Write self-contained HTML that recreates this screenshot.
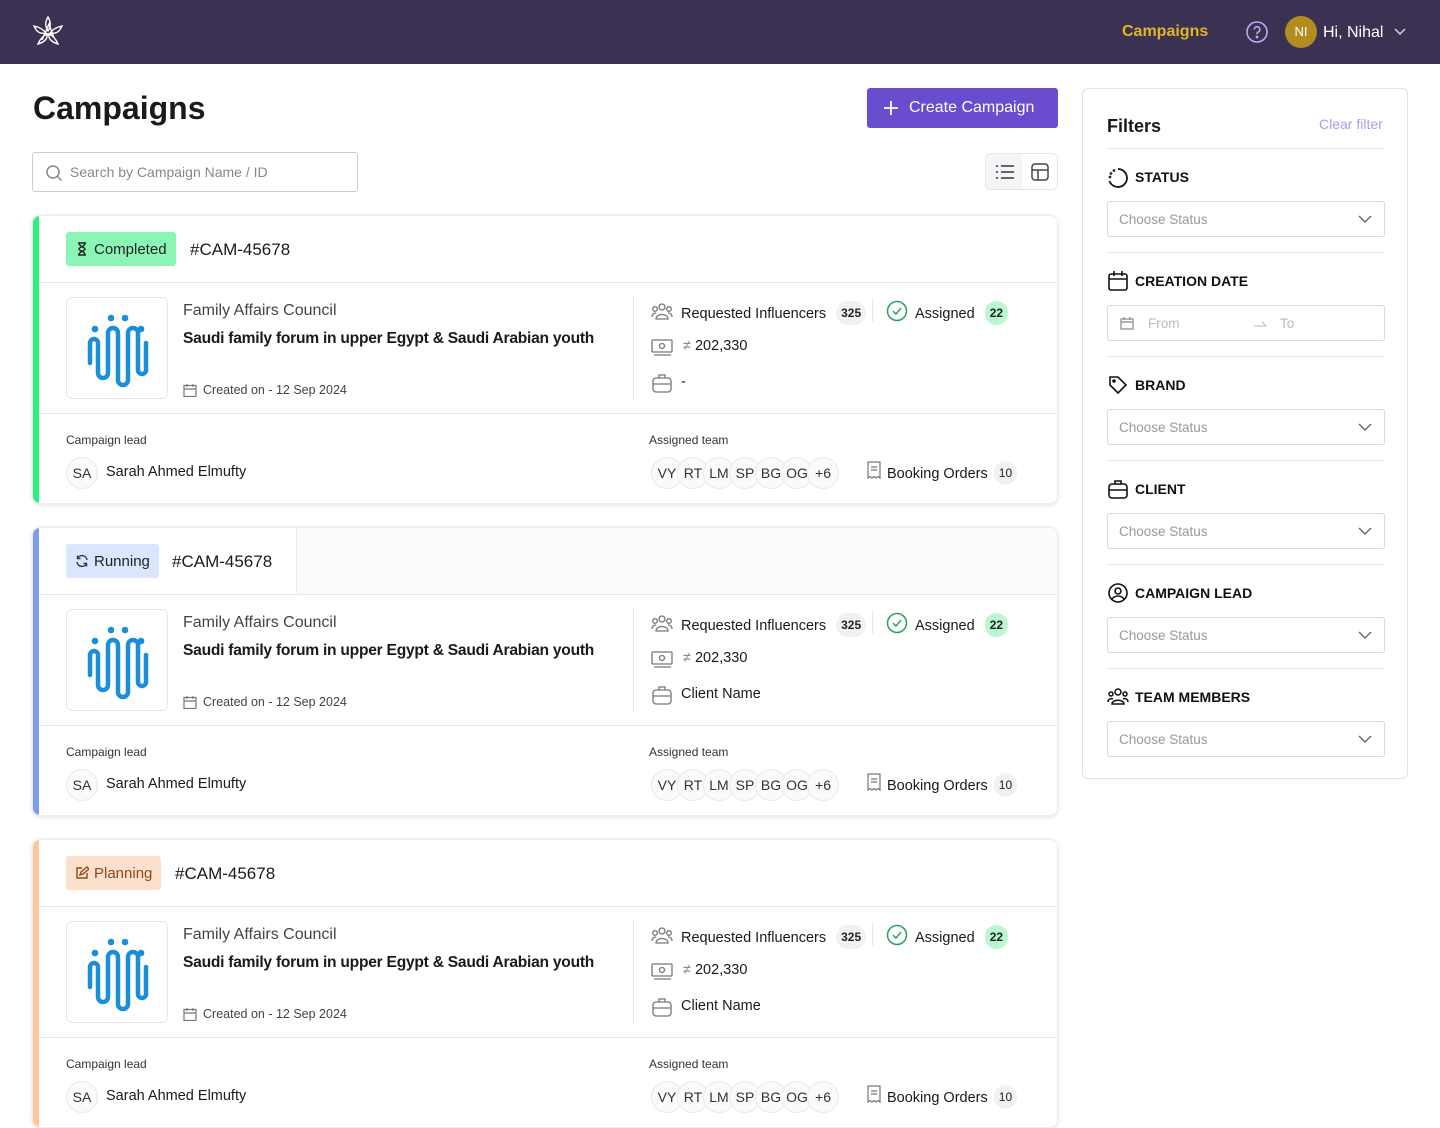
<!DOCTYPE html>
<html><head><meta charset="utf-8"><style>
*{box-sizing:border-box;margin:0;padding:0}
body{width:1440px;height:1039px;overflow:hidden;background:#fff;font-family:"Liberation Sans",sans-serif;color:#1a1a1a;position:relative}
.nav{position:absolute;left:0;top:0;width:1440px;height:64px;background:#3a3153}
.abs{position:absolute}
h1{position:absolute;left:33px;top:90px;font-size:32px;font-weight:700;color:#1a1a1a}
.search{position:absolute;left:32px;top:152px;width:326px;height:40px;border:1px solid #ccc;border-radius:3px;font-size:14px;color:#888;padding:11px 0 0 37px}
.btn{position:absolute;left:867px;top:88px;width:191px;height:40px;background:#6a4ccf;border-radius:3px;color:#fff;font-size:16px;line-height:40px;padding-left:42px}
.toggle{position:absolute;left:985px;top:153px;width:73px;height:37px;border:1px solid #e5e5e5;border-radius:6px;overflow:hidden}
.card{position:absolute;left:32px;width:1026px;height:289px;border-radius:8px;box-shadow:0 1px 4px rgba(0,0,0,.12);border:1px solid #eee;overflow:hidden;background:#fff}
.card .bar{position:absolute;left:0;top:0;bottom:0;width:6px}
.hdr{position:absolute;left:6px;right:0;top:0;height:67px;border-bottom:1px solid #e8e8e8}
.badge{position:absolute;left:27px;top:16px;height:34px;border-radius:3px;font-size:15px;padding:9px 9px 0 28px;color:#222}
.camid{position:absolute;top:24px;font-size:17px;color:#1a1a1a}
.logo{position:absolute;left:33px;top:81px;width:102px;height:102px;border:1px solid #e6e6e6;border-radius:6px}
.org{position:absolute;left:150px;top:86px;font-size:16px;color:#444}
.title{position:absolute;left:150px;top:114px;font-size:15.6px;letter-spacing:-0.25px;font-weight:700;color:#1a1a1a}
.created{position:absolute;left:150px;top:167px;font-size:12.5px;color:#444;padding-left:20px}
.vsep{position:absolute;left:600px;top:81px;width:1px;height:102px;background:#e6e6e6}
.hsep{position:absolute;left:6px;right:0;top:197px;height:1px;background:#e8e8e8}
.lbl{position:absolute;font-size:12px;color:#333}
.t15{font-size:14.5px;color:#1a1a1a}
.pill{display:inline-block;border-radius:12px;background:#f1f1f1;font-size:12px;padding:5px 5px;font-weight:700;color:#222}
.av{position:absolute;top:241px;width:32px;height:32px;border-radius:50%;border:1px solid #e9e9e9;background:#fafafa;font-size:14px;text-align:center;line-height:30px;color:#333}
.filters{position:absolute;left:1082px;top:88px;width:326px;height:691px;border:1px solid #e3e3e3;border-radius:6px}
.fh{position:absolute;left:24px;font-size:14px;font-weight:700;padding-left:28px;color:#111}
.sel{position:absolute;left:24px;width:278px;height:36px;border:1px solid #d9d9d9;border-radius:3px;font-size:13.5px;color:#999;padding:10px 0 0 11px}
.fline{position:absolute;left:24px;width:278px;height:1px;background:#e8e8e8}
.chev{position:absolute;right:12px;top:12px}
</style></head><body>
<div class="nav">
<svg class="abs" style="left:30px;top:14px" width="36" height="36" viewBox="0 0 36 36" fill="none" stroke="#fff" stroke-width="1.4"><path d="M18 3c-3 5-3 9 0 14 3-5 3-9 0-14zM4 12c5 1 9 3 12 7-5 1-9 0-12-7zM32 12c-5 1-9 3-12 7 5 1 9 0 12-7zM8 30c2-5 5-8 9-10 1 4-2 8-9 10zM28 30c-2-5-5-8-9-10-1 4 2 8 9 10zM12 26l7-16 5 14M14 20h9"/></svg>
<div class="abs" style="left:1122px;top:23px;font-size:16px;font-weight:700;color:#e3b521">Campaigns</div>
<svg class="abs" style="left:1245px;top:20px" width="24" height="24" viewBox="0 0 24 24" fill="none" stroke="#b9aef5" stroke-width="1.6"><circle cx="12" cy="12" r="10"/><path d="M9.3 9.5a2.8 2.8 0 1 1 3.6 2.7c-.6.3-.9.8-.9 1.5v.5"/><circle cx="12" cy="17" r=".6" fill="#b9aef5"/></svg>
<div class="abs" style="left:1285px;top:16px;width:32px;height:32px;border-radius:50%;background:#b38c1f;color:#fff;font-size:13px;text-align:center;line-height:32px">NI</div>
<div class="abs" style="left:1323px;top:24px;font-size:16px;color:#fff">Hi, Nihal</div>
<svg class="abs" style="left:1393px;top:27px" width="14" height="10" viewBox="0 0 14 10" fill="none" stroke="#ddd" stroke-width="1.4"><path d="M2 2l5 5 5-5"/></svg>
</div>
<h1>Campaigns</h1>
<div class="search">Search by Campaign Name / ID
<svg class="abs" style="left:12px;top:11px" width="18" height="18" viewBox="0 0 18 18" fill="none" stroke="#888" stroke-width="1.5"><circle cx="8" cy="8" r="6"/><path d="M12.5 12.5l4 4"/></svg></div>
<div class="btn"><svg class="abs" style="left:16px;top:12px" width="16" height="16" viewBox="0 0 16 16" stroke="#fff" stroke-width="1.8"><path d="M8 1v14M1 8h14"/></svg>Create Campaign</div>
<div class="toggle"><div class="abs" style="left:0;top:0;width:36px;height:37px;background:#f5f5f5"></div>
<svg class="abs" style="left:9px;top:10px" width="20" height="16" viewBox="0 0 20 16" stroke="#3a3153" stroke-width="1.6"><path d="M6 2h13M6 8h13M6 14h13M1 2h2M1 8h2M1 14h2"/></svg>
<svg class="abs" style="left:45px;top:9px" width="18" height="18" viewBox="0 0 18 18" fill="none" stroke="#444" stroke-width="1.5"><rect x="1" y="1" width="16" height="16" rx="3"/><path d="M1 7h16M7 7v10"/></svg></div>

<div class="card" style="top:215px"><div class="bar" style="background:#2ef07f"></div>
<div class="hdr"><div class="badge" style="background:#8af5b4">Completed<svg class="abs" style="left:9px;top:10px" width="14" height="14" viewBox="0 0 14 14" fill="none" stroke="#222" stroke-width="1.4"><path d="M3 1h8M3 13h8M4 1c0 4 6 4 6 6s-6 2-6 6M10 1c0 4-6 4-6 6s6 2 6 6"/></svg></div><div class="camid" style="left:151px">#CAM-45678</div></div>
INNER1
</div>
<div class="card" style="top:527px"><div class="bar" style="background:#7b9cf0"></div>
<div class="hdr" style="background:#fbfbfb"><div class="abs" style="left:0;top:0;width:258px;height:66px;background:#fff;border-right:1px solid #eee"></div><div class="badge" style="background:#dbe5fd">Running<svg class="abs" style="left:9px;top:10px" width="14" height="14" viewBox="0 0 14 14" fill="none" stroke="#333" stroke-width="1.4"><path d="M12 6a5 5 0 0 0-9.5-1.5M2 8a5 5 0 0 0 9.5 1.5M2.5 1.5v3h3M11.5 12.5v-3h-3"/></svg></div><div class="camid" style="left:133px">#CAM-45678</div></div>
INNER2
</div>
<div class="card" style="top:839px"><div class="bar" style="background:#fdc79a"></div>
<div class="hdr"><div class="badge" style="background:#fde0cc;color:#8a4a1a">Planning<svg class="abs" style="left:9px;top:10px" width="14" height="14" viewBox="0 0 14 14" fill="none" stroke="#8a4a1a" stroke-width="1.4"><path d="M7 2H2v10h10V7M5 9l1-3 6-5 2 2-6 5z"/></svg></div><div class="camid" style="left:136px">#CAM-45678</div></div>
INNER3
</div>

<div class="filters">
<div class="abs" style="left:24px;top:27px;font-size:18px;font-weight:700">Filters</div>
<div class="abs" style="left:236px;top:27px;font-size:14px;color:#a99bf0">Clear filter</div>
<div class="fline" style="top:59px"></div>
<div class="fh" style="top:80px">STATUS<svg class="abs" style="left:0;top:-2px" width="22" height="22" viewBox="0 0 22 22" fill="none" stroke="#111" stroke-width="1.8"><path d="M11 2a9 9 0 1 1-8.5 12" /><circle cx="3" cy="10" r=".5"/><circle cx="4" cy="6.5" r=".5"/><circle cx="7" cy="3.5" r=".5"/></svg></div>
<div class="sel" style="top:112px">Choose Status<svg class="chev" width="14" height="10" viewBox="0 0 14 10" fill="none" stroke="#666" stroke-width="1.4"><path d="M1 2l6 6 6-6"/></svg></div>
<div class="fline" style="top:163px"></div>
<div class="fh" style="top:184px">CREATION DATE<svg class="abs" style="left:0;top:-3px" width="22" height="22" viewBox="0 0 22 22" fill="none" stroke="#111" stroke-width="1.6"><rect x="2" y="4" width="18" height="16" rx="2"/><path d="M2 9h18M7 1v5M15 1v5"/></svg></div>
<div class="sel" style="top:216px;color:#bbb;padding-left:40px">From<span style="position:absolute;left:172px">To</span><svg class="abs" style="left:12px;top:10px" width="14" height="14" viewBox="0 0 14 14" fill="none" stroke="#999" stroke-width="1.4"><rect x="1" y="3" width="12" height="10"/><path d="M1 6h12M4 1v3M10 1v3"/></svg><svg class="abs" style="left:145px;top:14px" width="14" height="8" viewBox="0 0 14 8" fill="none" stroke="#bbb"><path d="M1 6h12L9 2"/></svg></div>
<div class="fline" style="top:267px"></div>
<div class="fh" style="top:288px">BRAND<svg class="abs" style="left:0;top:-3px" width="22" height="22" viewBox="0 0 22 22" fill="none" stroke="#111" stroke-width="1.6"><path d="M3 3h8l8 8-8 8-8-8z"/><circle cx="7" cy="7" r="1"/></svg></div>
<div class="sel" style="top:320px">Choose Status<svg class="chev" width="14" height="10" viewBox="0 0 14 10" fill="none" stroke="#666" stroke-width="1.4"><path d="M1 2l6 6 6-6"/></svg></div>
<div class="fline" style="top:371px"></div>
<div class="fh" style="top:392px">CLIENT<svg class="abs" style="left:0;top:-3px" width="22" height="22" viewBox="0 0 22 22" fill="none" stroke="#111" stroke-width="1.6"><rect x="2" y="6" width="18" height="14" rx="3"/><path d="M8 6V3h6v3M2 12h18"/></svg></div>
<div class="sel" style="top:424px">Choose Status<svg class="chev" width="14" height="10" viewBox="0 0 14 10" fill="none" stroke="#666" stroke-width="1.4"><path d="M1 2l6 6 6-6"/></svg></div>
<div class="fline" style="top:475px"></div>
<div class="fh" style="top:496px">CAMPAIGN LEAD<svg class="abs" style="left:0;top:-3px" width="22" height="22" viewBox="0 0 22 22" fill="none" stroke="#111" stroke-width="1.6"><circle cx="11" cy="11" r="9"/><circle cx="11" cy="9" r="3"/><path d="M5 17c3-4 9-4 12 0"/></svg></div>
<div class="sel" style="top:528px">Choose Status<svg class="chev" width="14" height="10" viewBox="0 0 14 10" fill="none" stroke="#666" stroke-width="1.4"><path d="M1 2l6 6 6-6"/></svg></div>
<div class="fline" style="top:579px"></div>
<div class="fh" style="top:600px">TEAM MEMBERS<svg class="abs" style="left:0;top:-3px" width="22" height="22" viewBox="0 0 22 22" fill="none" stroke="#111" stroke-width="1.5"><circle cx="11" cy="6" r="3"/><circle cx="4" cy="8" r="2"/><circle cx="18" cy="8" r="2"/><path d="M5 18c0-5 12-5 12 0zM1 16c0-3 3-4 5-3M21 16c0-3-3-4-5-3"/></svg></div>
<div class="sel" style="top:632px">Choose Status<svg class="chev" width="14" height="10" viewBox="0 0 14 10" fill="none" stroke="#666" stroke-width="1.4"><path d="M1 2l6 6 6-6"/></svg></div>
</div>
<script>
function inner(client){
var logo='<div class="logo"><svg style="position:absolute;left:19px;top:15px" width="64" height="76" viewBox="0 0 64 76" fill="none" stroke="#1a8fd8" stroke-width="4.5" stroke-linecap="round"><circle cx="25" cy="5" r="3.3" fill="#1a8fd8" stroke="none"/><circle cx="39" cy="5" r="3.3" fill="#1a8fd8" stroke="none"/><circle cx="9" cy="16" r="3.3" fill="#1a8fd8" stroke="none"/><circle cx="55" cy="16" r="3.3" fill="#1a8fd8" stroke="none"/><path d="M4 50V30a4 4 0 0 1 8 0v30a5 5 0 0 0 10 0V20a5 5 0 0 1 10 0v47a5 5 0 0 0 10 0V20a5 5 0 0 1 10 0v37a4 4 0 0 0 8 0V30"/></svg></div>';
var team=['VY','RT','LM','SP','BG','OG','+6'].map(function(t,i){return '<div class="av" style="left:'+(618+i*26)+'px">'+t+'</div>'}).join('');
return logo+'<div class="org">Family Affairs Council</div><div class="title">Saudi family forum in upper Egypt &amp; Saudi Arabian youth</div>'+
'<div class="created">Created on - 12 Sep 2024<svg style="position:absolute;left:0;top:0" width="14" height="14" viewBox="0 0 14 14" fill="none" stroke="#777" stroke-width="1.2"><rect x="1" y="2.5" width="12" height="11"/><path d="M1 6h12M4 1v3M10 1v3"/></svg></div>'+
'<div class="vsep"></div>'+
'<svg class="abs" style="left:618px;top:86px" width="22" height="20" viewBox="0 0 22 20" fill="none" stroke="#777" stroke-width="1.3"><circle cx="11" cy="5" r="3"/><circle cx="4" cy="7" r="2.3"/><circle cx="18" cy="7" r="2.3"/><path d="M5 17c0-6 12-6 12 0zM1 15c0-3 2-4 4-4M21 15c0-3-2-4-4-4"/></svg>'+
'<div class="abs t15" style="left:648px;top:86px">Requested Influencers <span class="pill" style="margin-left:6px;position:relative;top:-1px">325</span></div>'+
'<div class="abs" style="left:839px;top:82px;width:1px;height:24px;background:#e6e6e6"></div>'+
'<svg class="abs" style="left:853px;top:84px" width="22" height="22" viewBox="0 0 22 22" fill="none" stroke="#2aa35a" stroke-width="1.5"><circle cx="11" cy="11" r="9.5"/><path d="M7 11l3 3 5-6"/></svg>'+
'<div class="abs t15" style="left:882px;top:86px">Assigned <span class="pill" style="margin-left:6px;background:#b8f7cf;position:relative;top:-1px">22</span></div>'+
'<svg class="abs" style="left:618px;top:122px" width="22" height="20" viewBox="0 0 22 20" fill="none" stroke="#777" stroke-width="1.3"><rect x="1" y="2" width="20" height="12" rx="1"/><circle cx="11" cy="8" r="2.5"/><path d="M3 17h17"/></svg>'+
'<div class="abs t15" style="left:650px;top:122px"><span style="color:#888">&#x2260;</span> 202,330</div>'+
'<svg class="abs" style="left:618px;top:157px" width="22" height="20" viewBox="0 0 22 20" fill="none" stroke="#777" stroke-width="1.3"><rect x="2" y="5" width="18" height="14" rx="3"/><path d="M8 5V2h6v3M2 11h18"/></svg>'+
'<div class="abs t15" style="left:648px;top:158px">'+client+'</div>'+
'<div class="hsep"></div>'+
'<div class="lbl" style="left:33px;top:217px">Campaign lead</div>'+
'<div class="av" style="left:33px">SA</div><div class="abs t15" style="left:73px;top:248px">Sarah Ahmed Elmufty</div>'+
'<div class="lbl" style="left:616px;top:217px">Assigned team</div>'+team+
'<svg class="abs" style="left:833px;top:245px" width="16" height="18" viewBox="0 0 16 18" fill="none" stroke="#777" stroke-width="1.2"><path d="M2 1h12v16l-2-1.5-2 1.5-2-1.5-2 1.5-2-1.5-2 1.5zM5 6h6M5 9h6"/></svg>'+
'<div class="abs t15" style="left:854px;top:246px">Booking Orders <span class="pill" style="margin-left:2px;font-weight:400;position:relative;top:-1px">10</span></div>';
}
var html=document.body.innerHTML;
document.body.innerHTML=html.replace('INNER1',inner('-')).replace('INNER2',inner('Client Name')).replace('INNER3',inner('Client Name'));
</script>
</body></html>
